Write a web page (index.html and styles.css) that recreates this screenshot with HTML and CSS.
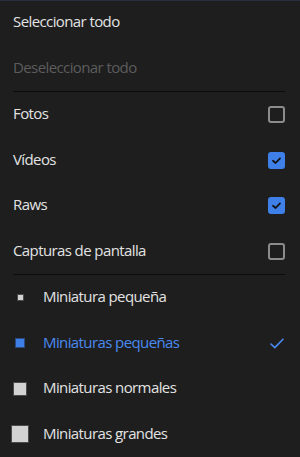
FILE: index.html
```html
<!DOCTYPE html>
<html lang="es">
<head>
<meta charset="utf-8">
<title>Menú</title>
<link rel="stylesheet" href="styles.css">
</head>
<body>
<div class="menu">
  <div class="row"><span class="label">Seleccionar todo</span></div>
  <div class="row"><span class="label disabled">Deseleccionar todo</span></div>
  <div class="divider"></div>
  <div class="row"><span class="label">Fotos</span><span class="box"></span></div>
  <div class="row"><span class="label">Vídeos</span><span class="box checked"><svg viewBox="0 0 17 17" width="17" height="17"><path d="M5 8.8 L7.6 11 L12 6.4" fill="none" stroke="#111" stroke-width="1.8" stroke-linecap="round" stroke-linejoin="round"/></svg></span></div>
  <div class="row"><span class="label">Raws</span><span class="box checked"><svg viewBox="0 0 17 17" width="17" height="17"><path d="M5 8.8 L7.6 11 L12 6.4" fill="none" stroke="#111" stroke-width="1.8" stroke-linecap="round" stroke-linejoin="round"/></svg></span></div>
  <div class="row"><span class="label">Capturas de pantalla</span><span class="box"></span></div>
  <div class="divider"></div>
  <div class="row thumb"><span class="ico"><span class="sq s1"></span></span><span class="label">Miniatura pequeña</span></div>
  <div class="row thumb active"><span class="ico"><span class="sq s2"></span></span><span class="label">Miniaturas pequeñas</span><svg class="tick" viewBox="0 0 14 11" width="14" height="11"><path d="M1 6 L4.8 9.6 L13 1.2" fill="none" stroke="#4a8af0" stroke-width="1.6" stroke-linecap="round" stroke-linejoin="round"/></svg></div>
  <div class="row thumb"><span class="ico"><span class="sq s3"></span></span><span class="label">Miniaturas normales</span></div>
  <div class="row thumb"><span class="ico"><span class="sq s4"></span></span><span class="label">Miniaturas grandes</span></div>
</div>
</body>
</html>
```
FILE: styles.css
```css
html, body {
  margin: 0;
  padding: 0;
  background: #1e1e1e;
}
.menu {
  width: 300px;
  height: 457px;
  box-sizing: border-box;
  box-shadow: inset 0 1px 0 #283040;
  background: #1e1e1e;
  font-family: "Open Sans", "Noto Sans", sans-serif;
  font-size: 15px;
  color: #e3e3e3;
  display: flex;
  flex-direction: column;
}
.row {
  height: 45.5px;
  box-sizing: border-box;
  padding: 0 15px 3px 13px;
  flex: none;
  display: flex;
  align-items: center;
}
.label {
  flex: 1;
  letter-spacing: -0.6px;
}
.disabled {
  color: #5c5c5c;
}
.divider {
  height: 1px;
  background: #0c0c0c;
  margin: 0 15px 0 13px;
  flex: none;
}
.box {
  width: 17px;
  height: 17px;
  box-sizing: border-box;
  border: 2px solid #8c8c8c;
  border-radius: 3px;
  display: flex;
  margin-top: 3px;
}
.box.checked {
  border: none;
  background: #3f80e8;
}
.ico {
  width: 30px;
  display: flex;
  justify-content: center;
  align-items: center;
  flex: none;
  margin-top: 3px;
}
.thumb {
  padding-left: 5px;
}
.thumb .label {
  padding-left: 8px;
}
.sq {
  display: block;
  box-sizing: border-box;
  background: #d2d2d2;
  border: 1px solid #4a4a4a;
}
.s1 { width: 7px; height: 7px; }
.s2 { width: 10px; height: 10px; background: #3f80e8; border-color: #2a4a80; }
.s3 { width: 14px; height: 14px; }
.s4 { width: 18px; height: 18px; }
.active .label {
  color: #4a8af0;
}
.tick {
  margin-right: 1px;
  margin-top: 3px;
}
```
